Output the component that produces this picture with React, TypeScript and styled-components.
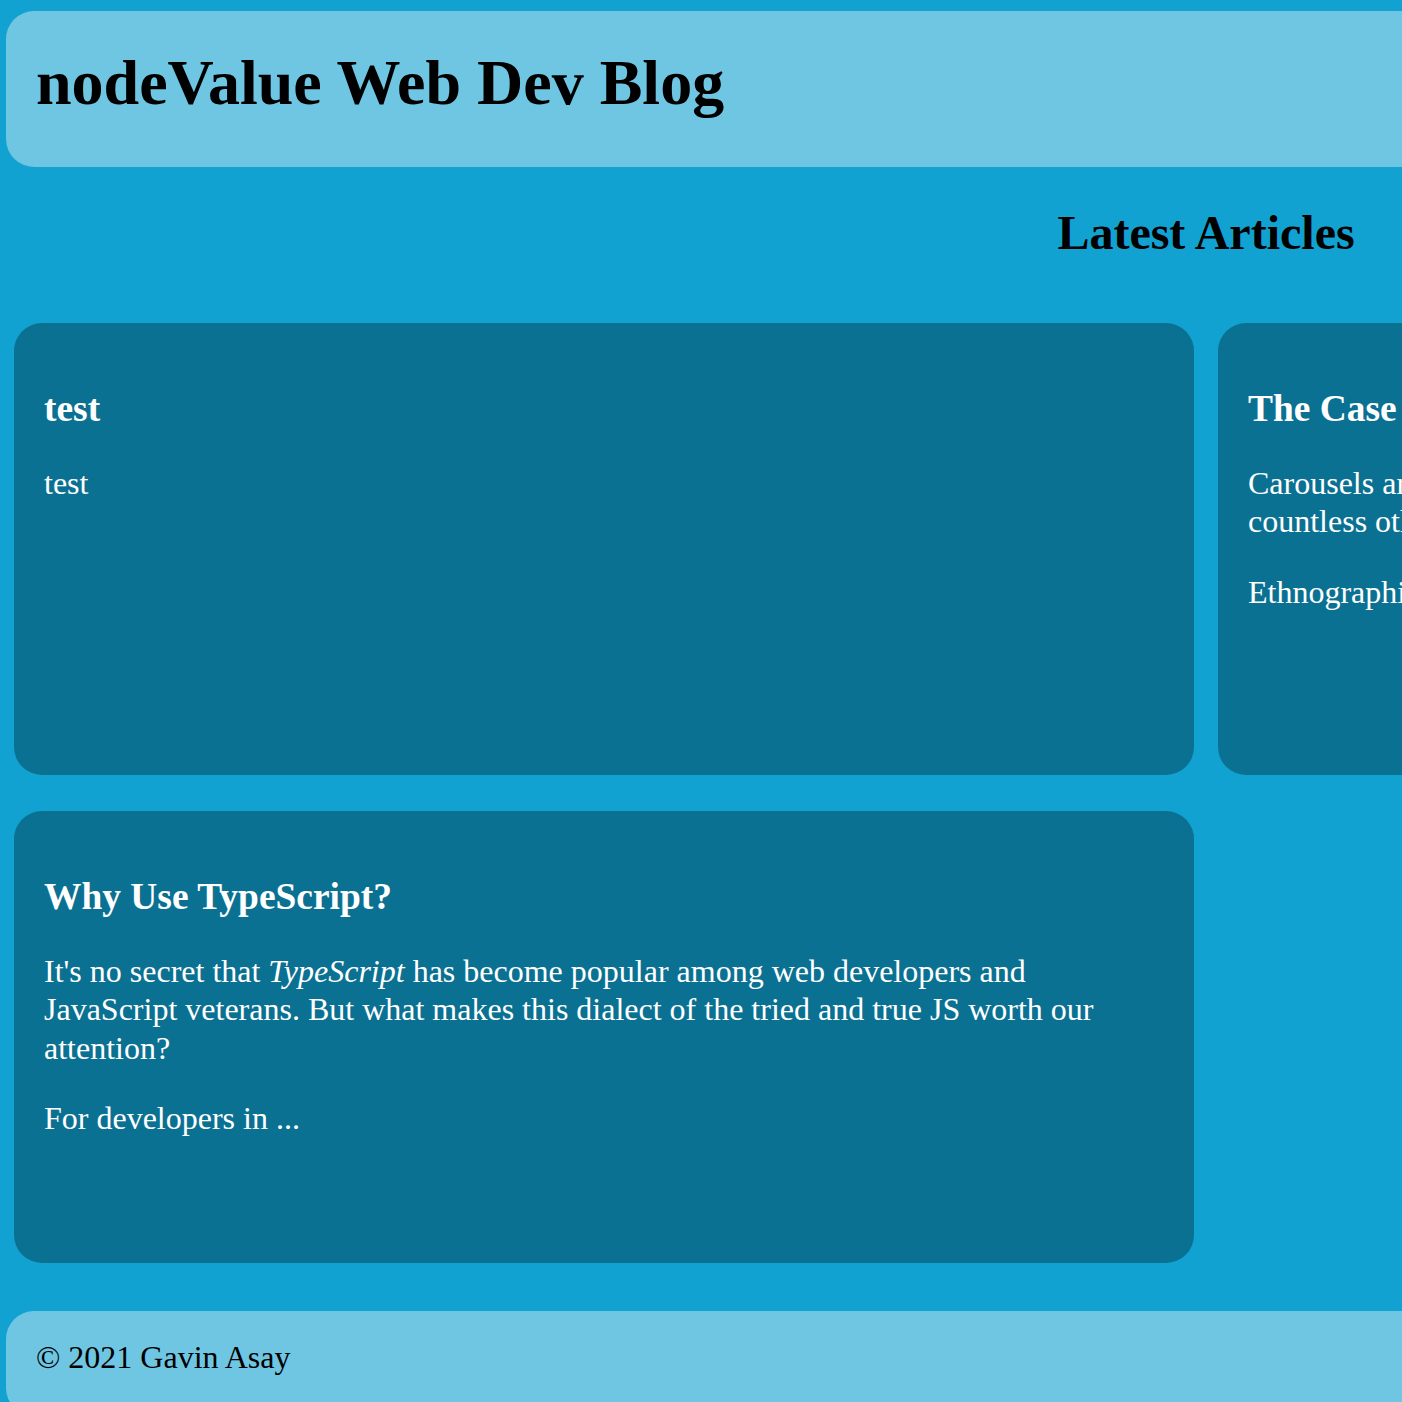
import React from "react";
import styled, { createGlobalStyle } from "styled-components";

const GlobalStyle = createGlobalStyle`
  html, body {
    margin: 0;
    padding: 0;
    background: #11a2d1;
  }
  body {
    font-family: "Liberation Serif", "Times New Roman", serif;
    font-size: 32px;
    color: #000;
  }
`;

const Page = styled.div`
  width: 2412px;
  padding-top: 11px;
  display: flex;
  flex-direction: column;
`;

const Header = styled.header`
  margin: 0 6px;
  padding: 35px 30px 47px;
  background: #6fc6e3;
  border-radius: 28px;
`;

const Title = styled.h1`
  margin: 0;
  font-size: 64px;
  font-weight: bold;
  line-height: normal;
`;

const Main = styled.main`
  display: flex;
  flex-direction: column;
`;

const SectionTitle = styled.h2`
  margin: 38px 0 63px;
  font-size: 48px;
  font-weight: bold;
  line-height: normal;
  text-align: center;
`;

const Grid = styled.section`
  display: grid;
  grid-template-columns: repeat(2, 1180px);
  grid-auto-rows: 452px;
  column-gap: 24px;
  row-gap: 36px;
  padding: 0 14px;
`;

const Card = styled.article`
  box-sizing: border-box;
  background: #0b7192;
  color: #fff;
  border-radius: 28px;
  padding: 64px 30px 30px;
  overflow: hidden;
`;

const CardTitle = styled.h3`
  margin: 0 0 34px;
  font-size: 37.44px;
  font-weight: bold;
  line-height: normal;
`;

const CardText = styled.p`
  margin: 0 0 32px;
  font-size: 32px;
  line-height: 1.2;
`;

const Footer = styled.footer`
  margin: 48px 6px 0;
  padding: 28px 30px 40px;
  background: #6fc6e3;
  border-radius: 28px;
  font-size: 32px;
  line-height: normal;
`;

const articles = [
  {
    title: "test",
    body: [<>test</>],
  },
  {
    title: "The Case Against Carousels",
    body: [
      <>
        Carousels are a fixture of e-commerce storefronts, news homepages,
        blogs, and countless other sites across the web. But are they actually
        worth it?
      </>,
      <>Ethnographic studies of ...</>,
    ],
  },
  {
    title: "Why Use TypeScript?",
    body: [
      <>
        It's no secret that <em>TypeScript</em> has become popular among web
        developers and JavaScript veterans. But what makes this dialect of the
        tried and true JS worth our attention?
      </>,
      <>For developers in ...</>,
    ],
  },
];

export default function App() {
  return (
    <>
      <GlobalStyle />
      <Page>
        <Header>
          <Title>nodeValue Web Dev Blog</Title>
        </Header>
        <Main>
          <SectionTitle>Latest Articles</SectionTitle>
          <Grid>
            {articles.map((a, i) => (
              <Card key={i}>
                <CardTitle>{a.title}</CardTitle>
                {a.body.map((b, j) => (
                  <CardText key={j}>{b}</CardText>
                ))}
              </Card>
            ))}
          </Grid>
        </Main>
        <Footer>© 2021 Gavin Asay</Footer>
      </Page>
    </>
  );
}
